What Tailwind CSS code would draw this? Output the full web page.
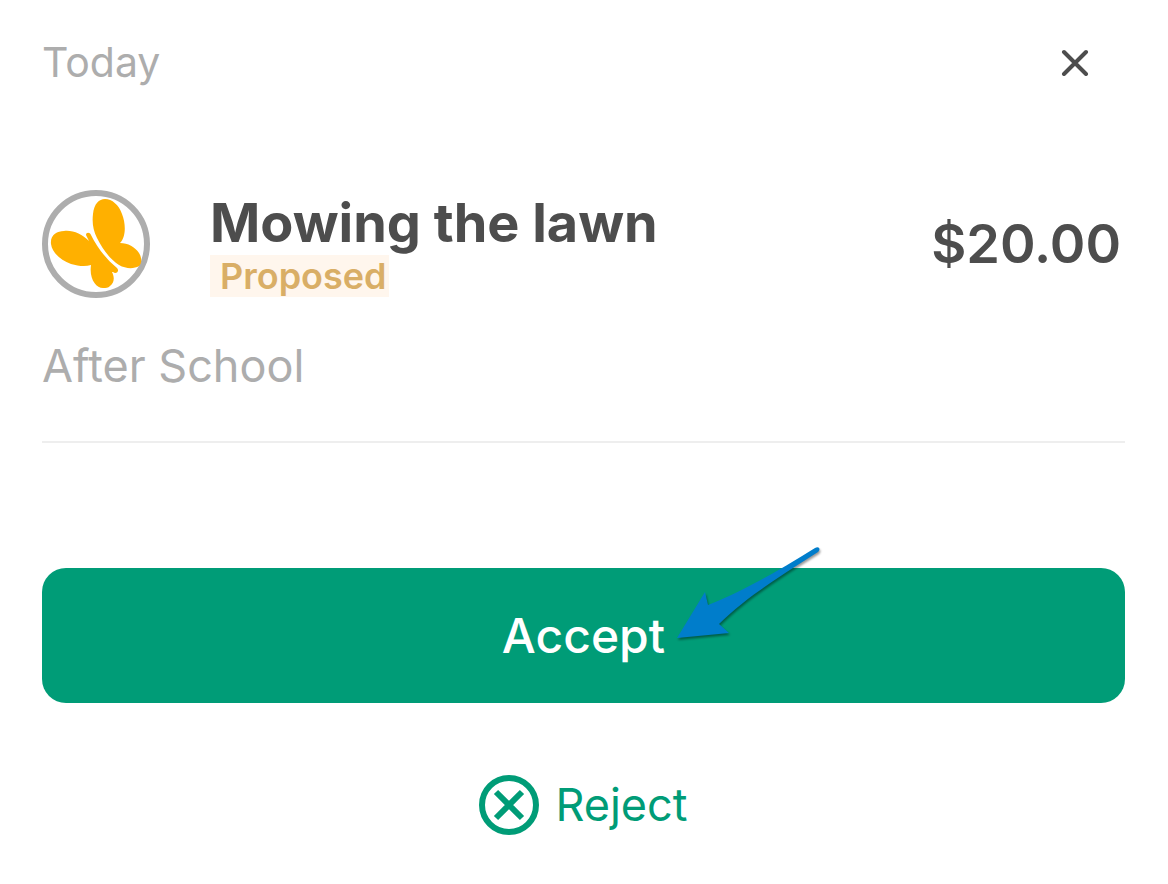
<!DOCTYPE html>
<html lang="en">
  <head>
    <meta charset="UTF-8" />
    <meta name="viewport" content="width=device-width, initial-scale=1.0" />
    <title>Mowing the lawn</title>
    <script src="https://cdn.jsdelivr.net/npm/@tailwindcss/browser@4"></script>
  </head>
  <body class="min-h-screen bg-white pr-[43px] pl-[42px] pt-8 pb-12 font-['Inter',sans-serif] text-[#4d4d4d]">
    <header class="flex items-center justify-between pr-8">
      <p class="text-[41px] leading-[60px] text-[#adadad]">Today</p>
      <button type="button" aria-label="Close" class="p-1">
        <svg class="size-7" viewBox="0 0 28 28" fill="none" stroke="currentColor" stroke-width="4" stroke-linecap="round">
          <path d="M3 4l22 22M25 4L3 26" />
        </svg>
      </button>
    </header>

    <main>
      <!-- Chore -->
      <section class="mt-[98px] border-b-2 border-[#eeeeee] pb-[45px]">
        <div class="flex items-center">
          <svg class="size-[108px] shrink-0" viewBox="0 0 108 108" aria-hidden="true">
            <circle cx="54" cy="54" r="51" fill="white" stroke="#adadad" stroke-width="6" />
            <g fill="#ffb000">
              <path d="M78 53C86 53 93 57 97 63C100 68 100 73 97 76C92 79 84 79 77 75C68 69 61 60 55 48C51 40 50 33 51 24C52 14 57 9 63 9C70 9 77 15 80 24C84 34 84 47 78 53Z" />
              <path d="M44 45C44 42 48 42 49 45C55 57 63 68 75 78C78 81 74 85 71 82L70 82C73 88 72 93 68 96C66 98 64 98 61 98C54 98 47 89 49 75C43 77 36 76 29 74C18 70 10 62 9 54C8 45 15 41 22 41C31 40 40 44 47 51Z" />
            </g>
          </svg>
          <div class="ml-[60px] flex grow flex-col items-start">
            <h1 class="text-[54px] leading-[64px] font-bold">Mowing the lawn</h1>
            <span class="bg-[#fff6ed] pr-[2px] pl-[10px] text-[36px] leading-[42px] font-semibold text-[#d9ae66]">Proposed</span>
          </div>
          <p class="pr-1 text-[54px] leading-[64px] font-semibold">$20.00</p>
        </div>
        <p class="mt-[38px] text-[45px] leading-[60px] text-[#adadad]">After School</p>
      </section>

      <!-- Actions -->
      <div class="mt-[125px] flex flex-col items-center">
        <button type="button" class="relative h-[135px] w-full rounded-3xl bg-[#009c77] text-[48px] font-medium text-white">
          <span class="relative">
            Accept
            <svg class="pointer-events-none absolute -top-16 left-full ml-2 h-[104px] w-[156px] overflow-visible drop-shadow-[1px_2px_1px_rgba(0,0,0,0.4)]" viewBox="0 0 156 104" aria-hidden="true">
              <path fill="#007dcb" d="M4 96L32 50L35 63C67 51 107 28 142 6C146 4 148 7 145 10C107 34 72 56 46 82L56 91Z" />
            </svg>
          </span>
        </button>
        <button type="button" class="mt-[72px] flex items-center gap-4 text-[45px] leading-[60px] text-[#009c77]">
          <svg class="size-[60px]" viewBox="0 0 60 60" fill="none" stroke="currentColor" stroke-width="6" aria-hidden="true">
            <circle cx="30" cy="30" r="27" />
            <path d="M17 17l26 26M43 17L17 43" />
          </svg>
          Reject
        </button>
      </div>
    </main>
  </body>
</html>
